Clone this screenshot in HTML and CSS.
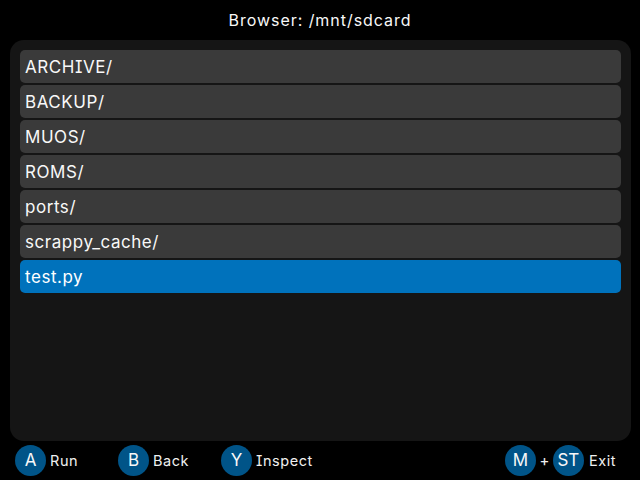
FILE: index.html
```html
<!DOCTYPE html>
<html lang="en">
<head>
<meta charset="utf-8">
<title>Browser</title>
<link rel="stylesheet" href="styles.css">
</head>
<body>
<div class="screen">
  <header class="title">Browser: /mnt/sdcard</header>
  <main class="panel">
    <div class="row">ARCHIVE/</div>
    <div class="row">BACKUP/</div>
    <div class="row">MUOS/</div>
    <div class="row">ROMS/</div>
    <div class="row">ports/</div>
    <div class="row">scrappy_cache/</div>
    <div class="row selected">test.py</div>
  </main>
  <footer class="footer">
    <div class="hints">
      <div class="hint"><span class="btn">A</span><span class="label">Run</span></div>
      <div class="hint"><span class="btn">B</span><span class="label">Back</span></div>
      <div class="hint"><span class="btn">Y</span><span class="label">Inspect</span></div>
    </div>
    <div class="combo"><span class="btn">M</span><span class="plus">+</span><span class="btn">ST</span><span class="label">Exit</span></div>
  </footer>
</div>
</body>
</html>
```
FILE: styles.css
```css
* { box-sizing: border-box; }
html, body { margin: 0; padding: 0; background: #000; }
.screen {
  width: 640px; height: 480px; background: #000; color: #fff;
  display: flex; flex-direction: column;
  font-family: Inter, sans-serif; overflow: hidden;
  font-feature-settings: "cv08" 1, "ss02" 1;
}
.title {
  height: 40px; padding-bottom: 1px; display: flex; align-items: center; justify-content: center;
  font-size: 16px; letter-spacing: 0.95px; color: #f8f8f8;
}
.panel {
  margin: 0 9px 0 10px; height: 401px; background: #151515; border-radius: 14px;
  padding: 10px 10px 0; display: flex; flex-direction: column; gap: 2px;
}
.row {
  height: 33px; background: #3a3a3a; border-radius: 5px;
  padding: 0 0 0 5px; display: flex; align-items: center;
  font-size: 17px; letter-spacing: 0.55px; color: #f8f8f8;
}
.row.selected { background: #0072bc; color: #fff; }
.footer {
  flex: 1; display: flex; justify-content: space-between; align-items: center;
  padding: 0 24px 0 15px;
}
.hints { display: flex; }
.hint { display: flex; align-items: center; width: 103px; }
.combo { display: flex; align-items: center; }
.combo .label { margin-left: 5px; }
.btn {
  width: 31px; height: 31px; border-radius: 50%; background: #005488;
  display: flex; align-items: center; justify-content: center; flex: none;
  font-size: 17px; color: #f8f8f8; padding-bottom: 1px;
}
.label { margin-left: 4px; font-size: 14.5px; letter-spacing: 0.55px; color: #f0f0f0; }
.plus { width: 17px; text-align: center; font-size: 15px; color: #f0f0f0; }
```
